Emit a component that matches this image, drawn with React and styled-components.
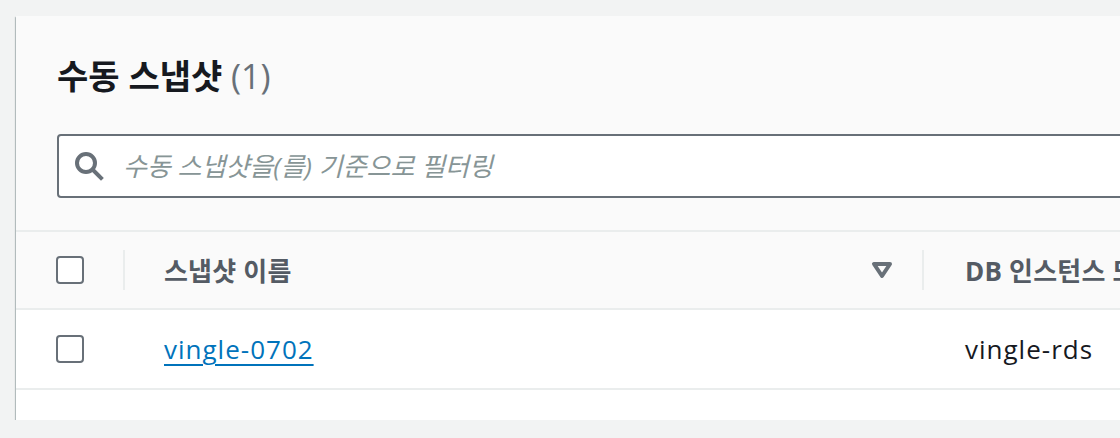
import React from 'react';
import styled, { createGlobalStyle } from 'styled-components';

const GlobalStyle = createGlobalStyle`
  html, body {
    margin: 0;
    padding: 0;
    background: #f2f3f3;
    overflow: hidden;
  }
  body {
    font-family: "Open Sans", "Noto Sans CJK KR", sans-serif;
  }
`;

const Page = styled.div`
  padding: 16px 0 0 16px;
  width: 1300px;
`;

const Card = styled.div`
  background: #ffffff;
  box-shadow: 0 2px 1px 0 rgba(0, 28, 36, 0.45), -1px 1px 1px 0 rgba(0, 28, 36, 0.2);
  padding-bottom: 30px;
`;

const Header = styled.div`
  background: #fafafa;
  padding: 38px 40px 32px 41px;
  border-bottom: 2px solid #eaeded;
`;

const Title = styled.h2`
  margin: 0 0 36px;
  font-size: 34px;
  line-height: 44px;
  font-weight: 700;
  color: #16191f;
`;

const Count = styled.span`
  color: #687078;
  font-weight: 400;
`;

const SearchBox = styled.div`
  display: flex;
  align-items: center;
  gap: 18px;
  height: 64px;
  box-sizing: border-box;
  border: 2px solid #687078;
  border-radius: 4px;
  background: #ffffff;
  padding-left: 14px;
`;

const SearchInput = styled.input`
  flex: 1;
  border: none;
  outline: none;
  background: transparent;
  padding: 0;
  font-family: "Open Sans", "Noto Sans CJK KR", sans-serif;
  font-size: 26px;
  font-style: italic;
  color: #16191f;
  &::placeholder {
    color: #879596;
  }
`;

const Row = styled.div`
  display: flex;
  align-items: center;
  height: ${p => p.$h}px;
  background: ${p => (p.$head ? '#fafafa' : '#ffffff')};
  border-bottom: 2px solid #eaeded;
`;

const CheckCell = styled.div`
  width: 107px;
  box-sizing: border-box;
  padding-left: 40px;
  display: flex;
  align-items: center;
`;

const Checkbox = styled.span`
  display: block;
  width: 28px;
  height: 28px;
  box-sizing: border-box;
  border: 2px solid #687078;
  border-radius: 4px;
  background: #ffffff;
`;

const Divider = styled.span`
  width: 2px;
  height: ${p => (p.$show ? '40px' : '0')};
  background: #eaeded;
`;

const Cell = styled.div`
  width: ${p => p.$w || 'auto'};
  box-sizing: border-box;
  padding: 0 ${p => p.$pr || 0}px 0 ${p => p.$pl}px;
  display: flex;
  align-items: center;
  justify-content: space-between;
  font-size: 26px;
  letter-spacing: ${p => (p.$head ? '0.2px' : '1px')};
  white-space: nowrap;
  color: ${p => (p.$head ? '#545b64' : '#16191f')};
  font-weight: ${p => (p.$head ? 700 : 400)};
`;

const Link = styled.a`
  color: #0073bb;
  text-decoration: underline;
  text-decoration-thickness: 2px;
  text-underline-offset: 5px;
`;

const SearchIcon = () => (
  <svg width="32" height="32" viewBox="0 0 32 32" fill="none">
    <circle cx="13" cy="13" r="9" stroke="#687078" strokeWidth="4" />
    <path d="M20 20 L28 28" stroke="#687078" strokeWidth="4" strokeLinecap="square" />
  </svg>
);

const SortIcon = () => (
  <svg width="22" height="18" viewBox="0 0 22 18" fill="none">
    <path d="M3 3 H19 L11 15 Z" stroke="#687078" strokeWidth="4" strokeLinejoin="round" />
  </svg>
);

const App = () => {
  return (
    <>
      <GlobalStyle />
      <Page>
        <Card>
          <Header>
            <Title>
              수동 스냅샷 <Count>(1)</Count>
            </Title>
            <SearchBox>
              <SearchIcon />
              <SearchInput placeholder="수동 스냅샷을(를) 기준으로 필터링" />
            </SearchBox>
          </Header>

          <Row $head $h={76}>
            <CheckCell>
              <Checkbox />
            </CheckCell>
            <Divider $show />
            <Cell $head $w="797px" $pl={39} $pr={29}>
              <span>스냅샷 이름</span>
              <SortIcon />
            </Cell>
            <Divider $show />
            <Cell $head $pl={41}>
              DB 인스턴스 또는 클러스터
            </Cell>
          </Row>

          <Row $h={78}>
            <CheckCell>
              <Checkbox />
            </CheckCell>
            <Divider />
            <Cell $w="799px" $pl={39}>
              <Link href="#">vingle-0702</Link>
            </Cell>
            <Cell $pl={41}>vingle-rds</Cell>
          </Row>
        </Card>
      </Page>
    </>
  );
};

export default App;
